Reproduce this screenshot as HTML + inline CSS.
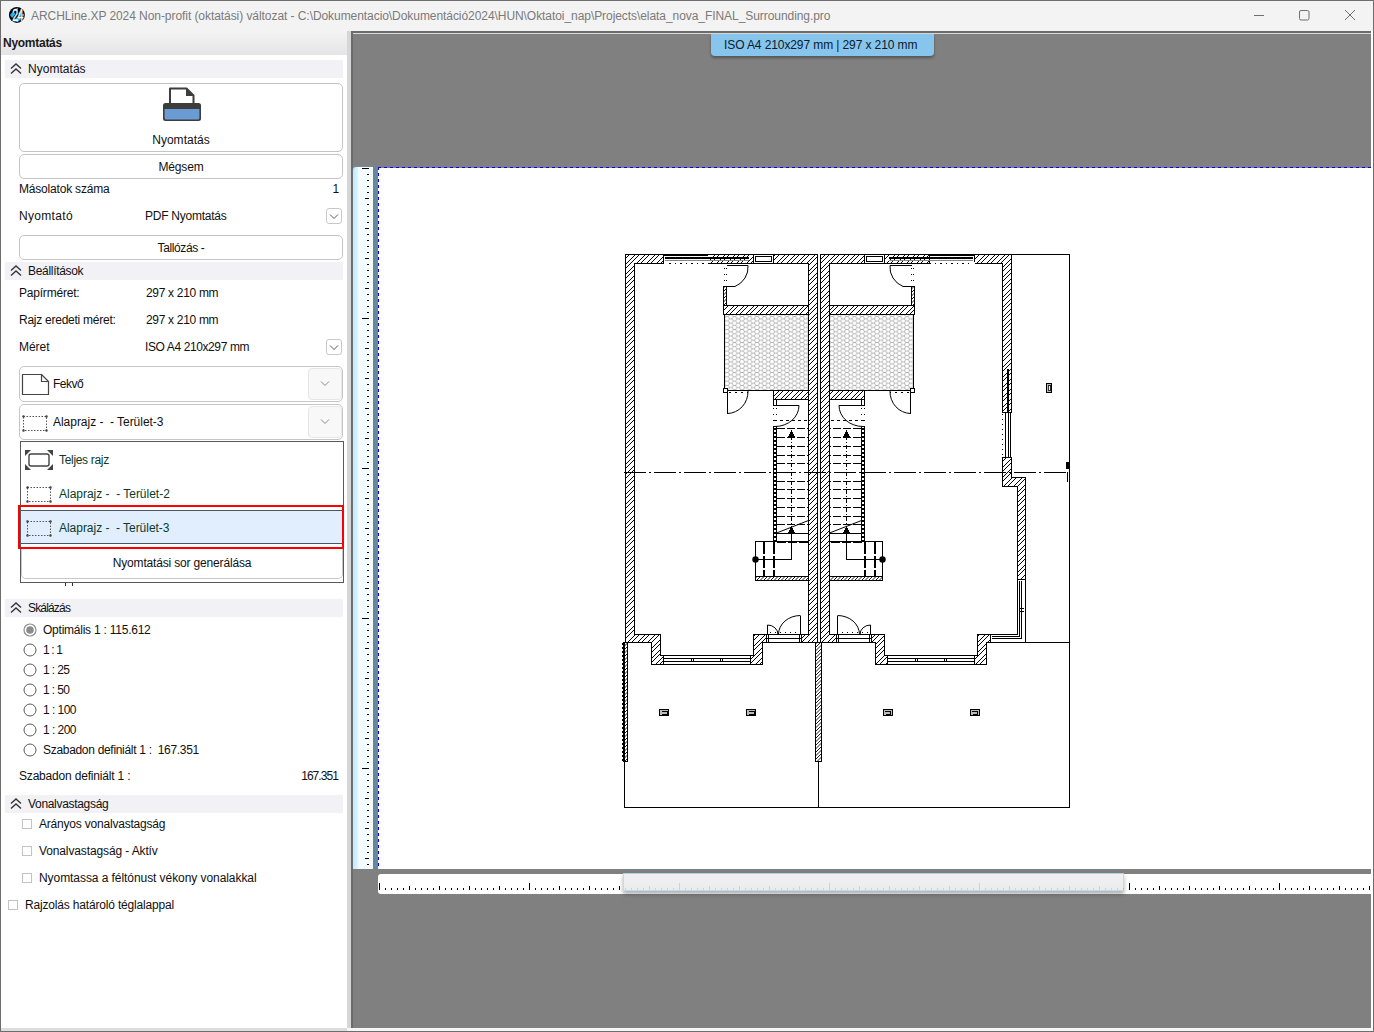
<!DOCTYPE html>
<html lang="hu">
<head>
<meta charset="utf-8">
<title>ARCHLine.XP 2024</title>
<style>
*{box-sizing:border-box;margin:0;padding:0}
html,body{width:1374px;height:1032px;overflow:hidden;background:#fff}
body{position:relative;font-family:"Liberation Sans",sans-serif;font-size:12px;color:#111;}
.abs{position:absolute}
.t{position:absolute;white-space:nowrap;line-height:16px;height:16px;font-size:12px;color:#101010;letter-spacing:-0.07px}
#titlebar{left:0;top:0;width:1374px;height:31px;background:#f3f3f3;border-top:1px solid #6d6d6d}
#title{left:31px;top:8px;color:#7a7a7a;font-size:12px;letter-spacing:-0.075px}
#frameL{left:0;top:0;width:1px;height:1032px;background:#6d6d6d}
#panelhead{left:1px;top:31px;width:346px;height:24px;background:linear-gradient(#f4f4f4,#e4e4e6)}
#panelhead .t{left:2px;top:4px;font-weight:bold;color:#1a1a1a}
.sec{position:absolute;left:5px;width:338px;height:18px;background:#f1f1f6}
.sec .t{left:23px;top:1px}
.sec svg{position:absolute;left:5px;top:3px}
.btn{position:absolute;left:19px;width:324px;border:1px solid #c4c4c4;border-radius:5px;background:#fff}
.btn .t{left:0;width:100%;text-align:center}
.dd{position:absolute;left:326px;width:16px;height:16px;border:1px solid #c8c8c8;border-radius:3px;background:#fff}
.combo{position:absolute;left:19px;width:324px;height:36px;border:1px solid #c6c6c6;border-radius:5px;background:#fff}
.combo .arrow{position:absolute;right:0;top:1px;width:34px;height:32px;background:#f8f8f8;border:1px solid #e6e6e6;border-radius:4px}
</style>
</head>
<body>
<div id="titlebar" class="abs"></div>
<div id="frameL" class="abs"></div>
<div id="title" class="t" style="letter-spacing:-0.063px">ARCHLine.XP 2024 Non-profit (oktatási) változat - C:\Dokumentacio\Dokumentáció2024\HUN\Oktatoi_nap\Projects\elata_nova_FINAL_Surrounding.pro</div>

<!-- LEFT PANEL -->
<div id="panelhead" class="abs"><div class="t" style="letter-spacing:-0.270px">Nyomtatás</div></div>

<div class="sec" style="top:60px"><svg width="12" height="12" viewBox="0 0 12 12"><path d="M1 5.6 L6 1 L11 5.6 M1 10.6 L6 6 L11 10.6" fill="none" stroke="#333" stroke-width="1.3"/></svg><div class="t" style="letter-spacing:0.030px">Nyomtatás</div></div>
<div class="btn" style="top:83px;height:69px"><div class="t" style="letter-spacing:0.030px;top:48px">Nyomtatás</div></div>
<svg class="abs" style="left:161px;top:85px" width="42" height="38" viewBox="0 0 42 38">
<path d="M9 18 V3.5 H25.5 L32.5 10.5 V18" fill="#fff" stroke="#3d3d3d" stroke-width="2" stroke-linejoin="round"/>
<path d="M25 3 L33 11 H25 Z" fill="#3d3d3d"/>
<rect x="2" y="18" width="38" height="18" rx="2.5" fill="#3d3d3d"/>
<path d="M3.6 24 H38.4 V33 Q38.4 34.4 37 34.4 H5 Q3.6 34.4 3.6 33 Z" fill="#6a9bd2"/>
</svg>
<div class="btn" style="top:154px;height:25px"><div class="t" style="letter-spacing:-0.163px;top:4px">Mégsem</div></div>
<div class="t" style="letter-spacing:-0.191px;left:19px;top:181px;">Másolatok száma</div>
<div class="t" style="right:1035px;top:181px">1</div>
<div class="t" style="letter-spacing:0.320px;left:19px;top:208px;">Nyomtató</div>
<div class="t" style="letter-spacing:-0.249px;left:145px;top:208px;">PDF Nyomtatás</div>
<div class="dd" style="top:208px"><svg width="14" height="14" viewBox="0 0 14 14" style="position:absolute;left:0;top:0"><path d="M3 5.5 L7 9.5 L11 5.5" fill="none" stroke="#555" stroke-width="1"/></svg></div>
<div class="btn" style="top:235px;height:25px"><div class="t" style="letter-spacing:-0.387px;top:4px">Tallózás -</div></div>
<div class="sec" style="top:262px"><svg width="12" height="12" viewBox="0 0 12 12"><path d="M1 5.6 L6 1 L11 5.6 M1 10.6 L6 6 L11 10.6" fill="none" stroke="#333" stroke-width="1.3"/></svg><div class="t" style="letter-spacing:-0.310px">Beállítások</div></div>
<div class="t" style="letter-spacing:-0.210px;left:19px;top:285px;">Papírméret:</div>
<div class="t" style="letter-spacing:-0.313px;left:146px;top:285px;">297 x 210 mm</div>
<div class="t" style="letter-spacing:-0.254px;left:19px;top:312px;">Rajz eredeti méret:</div>
<div class="t" style="letter-spacing:-0.313px;left:146px;top:312px;">297 x 210 mm</div>
<div class="t" style="letter-spacing:-0.047px;left:19px;top:339px;">Méret</div>
<div class="t" style="letter-spacing:-0.390px;left:145px;top:339px;">ISO A4 210x297 mm</div>
<div class="dd" style="top:339px"><svg width="14" height="14" viewBox="0 0 14 14" style="position:absolute;left:0;top:0"><path d="M3 5.5 L7 9.5 L11 5.5" fill="none" stroke="#555" stroke-width="1"/></svg></div>
<div class="combo" style="top:366px"><div class="arrow"><svg width="32" height="29" viewBox="0 0 32 29" style="position:absolute;left:0;top:0"><path d="M12 12.5 L16 16.5 L20 12.5" fill="none" stroke="#8a8a8a" stroke-width="1"/></svg></div></div>
<svg class="abs" style="left:21px;top:373px" width="29" height="23" viewBox="0 0 29 23"><path d="M1.5 1.5 H20.5 L27.5 8.5 V21.5 H1.5 Z" fill="#fff" stroke="#444" stroke-width="1.2" stroke-linejoin="round"/><path d="M20.5 1.5 V8.5 H27.5" fill="none" stroke="#444" stroke-width="1.2"/></svg>
<div class="t" style="letter-spacing:-0.472px;left:53px;top:376px;">Fekvő</div>
<div class="combo" style="top:404px"><div class="arrow"><svg width="32" height="29" viewBox="0 0 32 29" style="position:absolute;left:0;top:0"><path d="M12 12.5 L16 16.5 L20 12.5" fill="none" stroke="#8a8a8a" stroke-width="1"/></svg></div></div>
<svg class="abs" style="left:22px;top:415px" width="26" height="17" viewBox="0 0 26 17"><rect x="1.5" y="1.5" width="23" height="14" fill="none" stroke="#555" stroke-width="1" stroke-dasharray="1.5 1.5"/><g fill="#444"><rect x="0.3" y="0.3" width="2.4" height="2.4" rx="1"/><rect x="23.3" y="0.3" width="2.4" height="2.4" rx="1"/><rect x="0.3" y="14.3" width="2.4" height="2.4" rx="1"/><rect x="23.3" y="14.3" width="2.4" height="2.4" rx="1"/></g></svg>
<div class="t" style="letter-spacing:-0.030px;left:53px;top:414px;">Alaprajz -&nbsp; - Terület-3</div>
<div class="abs" style="left:65px;top:582px;width:1px;height:4px;background:#333"></div><div class="abs" style="left:72px;top:582px;width:1px;height:4px;background:#333"></div>
<div class="abs" id="ddlist" style="left:20px;top:441px;width:324px;height:142px;background:#fff;border:1px solid #5a5a5a"></div>
<svg class="abs" style="left:24px;top:449px" width="30" height="22" viewBox="0 0 30 22"><g fill="#444"><path d="M1 1 H7 L1 7 Z"/><path d="M29 1 H23 L29 7 Z"/><path d="M1 21 H7 L1 15 Z"/><path d="M29 21 H23 L29 15 Z"/></g><rect x="5" y="5" width="20" height="12" rx="2" fill="#fff" stroke="#444" stroke-width="1.4"/></svg>
<div class="t" style="letter-spacing:-0.316px;left:59px;top:452px;color:#0c3a2a">Teljes rajz</div>
<svg class="abs" style="left:26px;top:486px" width="26" height="17" viewBox="0 0 26 17"><rect x="1.5" y="1.5" width="23" height="14" fill="none" stroke="#555" stroke-width="1" stroke-dasharray="1.5 1.5"/><g fill="#444"><rect x="0.3" y="0.3" width="2.4" height="2.4" rx="1"/><rect x="23.3" y="0.3" width="2.4" height="2.4" rx="1"/><rect x="0.3" y="14.3" width="2.4" height="2.4" rx="1"/><rect x="23.3" y="14.3" width="2.4" height="2.4" rx="1"/></g></svg>
<div class="t" style="letter-spacing:-0.016px;left:59px;top:486px;color:#0c3a2a">Alaprajz -&nbsp; - Terület-2</div>
<div class="abs" style="left:21px;top:510px;width:321px;height:34px;background:#e0eefe;border-top:1px solid #4a5562;border-bottom:1px solid #4a5562"></div>
<svg class="abs" style="left:26px;top:520px" width="26" height="17" viewBox="0 0 26 17"><rect x="1.5" y="1.5" width="23" height="14" fill="none" stroke="#555" stroke-width="1" stroke-dasharray="1.5 1.5"/><g fill="#444"><rect x="0.3" y="0.3" width="2.4" height="2.4" rx="1"/><rect x="23.3" y="0.3" width="2.4" height="2.4" rx="1"/><rect x="0.3" y="14.3" width="2.4" height="2.4" rx="1"/><rect x="23.3" y="14.3" width="2.4" height="2.4" rx="1"/></g></svg>
<div class="t" style="letter-spacing:-0.030px;left:59px;top:520px;color:#0c3a2a">Alaprajz -&nbsp; - Terület-3</div>
<div class="abs" style="left:18px;top:505px;width:326px;height:44px;border:2px solid #f00"></div>
<div class="abs" style="left:21px;top:549px;width:322px;height:30px;border:1px solid #c8c8c8;border-top:none;border-radius:0 0 5px 5px"><div class="t" style="letter-spacing:-0.172px;left:0;width:100%;text-align:center;top:6px">Nyomtatási sor generálása</div></div>
<div class="sec" style="top:599px"><svg width="12" height="12" viewBox="0 0 12 12"><path d="M1 5.6 L6 1 L11 5.6 M1 10.6 L6 6 L11 10.6" fill="none" stroke="#333" stroke-width="1.3"/></svg><div class="t" style="letter-spacing:-0.829px">Skálázás</div></div>
<svg class="abs" style="left:23px;top:623px" width="14" height="14"><circle cx="7" cy="7" r="6" fill="#fff" stroke="#8c8c8c" stroke-width="1.2"/><circle cx="7" cy="7" r="3.8" fill="#8c8c8c"/></svg>
<div class="t" style="letter-spacing:-0.236px;left:43px;top:622px;">Optimális 1 : 115.612</div>
<svg class="abs" style="left:23px;top:643px" width="14" height="14"><circle cx="7" cy="7" r="6" fill="#fff" stroke="#5a5a5a" stroke-width="1"/></svg>
<div class="t" style="letter-spacing:-0.840px;left:43px;top:642px;">1 : 1</div>
<svg class="abs" style="left:23px;top:663px" width="14" height="14"><circle cx="7" cy="7" r="6" fill="#fff" stroke="#5a5a5a" stroke-width="1"/></svg>
<div class="t" style="letter-spacing:-0.606px;left:43px;top:662px;">1 : 25</div>
<svg class="abs" style="left:23px;top:683px" width="14" height="14"><circle cx="7" cy="7" r="6" fill="#fff" stroke="#5a5a5a" stroke-width="1"/></svg>
<div class="t" style="letter-spacing:-0.606px;left:43px;top:682px;">1 : 50</div>
<svg class="abs" style="left:23px;top:703px" width="14" height="14"><circle cx="7" cy="7" r="6" fill="#fff" stroke="#5a5a5a" stroke-width="1"/></svg>
<div class="t" style="letter-spacing:-0.534px;left:43px;top:702px;">1 : 100</div>
<svg class="abs" style="left:23px;top:723px" width="14" height="14"><circle cx="7" cy="7" r="6" fill="#fff" stroke="#5a5a5a" stroke-width="1"/></svg>
<div class="t" style="letter-spacing:-0.534px;left:43px;top:722px;">1 : 200</div>
<svg class="abs" style="left:23px;top:743px" width="14" height="14"><circle cx="7" cy="7" r="6" fill="#fff" stroke="#5a5a5a" stroke-width="1"/></svg>
<div class="t" style="letter-spacing:-0.306px;left:43px;top:742px;">Szabadon definiált 1 :&nbsp; 167.351</div>
<div class="t" style="letter-spacing:-0.187px;left:19px;top:768px;">Szabadon definiált 1 :</div>
<div class="t" style="letter-spacing:-0.932px;right:1036px;top:768px">167.351</div>
<div class="sec" style="top:795px"><svg width="12" height="12" viewBox="0 0 12 12"><path d="M1 5.6 L6 1 L11 5.6 M1 10.6 L6 6 L11 10.6" fill="none" stroke="#333" stroke-width="1.3"/></svg><div class="t" style="letter-spacing:-0.310px">Vonalvastagság</div></div>
<div class="abs" style="left:22px;top:819px;width:10px;height:10px;border:1px solid #c3c3c3;background:#fff"></div>
<div class="t" style="letter-spacing:-0.202px;left:39px;top:816px;">Arányos vonalvastagság</div>
<div class="abs" style="left:22px;top:846px;width:10px;height:10px;border:1px solid #c3c3c3;background:#fff"></div>
<div class="t" style="letter-spacing:-0.124px;left:39px;top:843px;">Vonalvastagság - Aktív</div>
<div class="abs" style="left:22px;top:873px;width:10px;height:10px;border:1px solid #c3c3c3;background:#fff"></div>
<div class="t" style="letter-spacing:-0.066px;left:39px;top:870px;">Nyomtassa a féltónust vékony vonalakkal</div>
<div class="abs" style="left:8px;top:900px;width:10px;height:10px;border:1px solid #c3c3c3;background:#fff"></div>
<div class="t" style="letter-spacing:-0.172px;left:25px;top:897px;">Rajzolás határoló téglalappal</div>
<!-- RIGHT -->
<div class="abs" style="left:347px;top:31px;width:4px;height:997px;background:#d6d6d6"></div>
<div class="abs" style="left:351px;top:31px;width:1020px;height:997px;background:#808080;border-left:2px solid #6b6b6b;border-top:2px solid #6b6b6b"></div>
<div class="abs" style="left:353px;top:33px;width:1018px;height:1px;background:#d9d9d9"></div>
<div class="abs" style="left:1371px;top:31px;width:2px;height:1000px;background:#fff"></div>
<div class="abs" style="left:1373px;top:0;width:1px;height:1032px;background:#6d6d6d"></div>
<div class="abs" style="left:1px;top:1028px;width:1372px;height:3px;background:#dcdcdc"></div>
<div class="abs" style="left:347px;top:1028px;width:1026px;height:3px;background:#f6f6f6"></div>
<div class="abs" style="left:0;top:1031px;width:1374px;height:1px;background:#6d6d6d"></div>
<svg class="abs" style="left:1240px;top:1px" width="130" height="30" viewBox="1240 1 130 30" shape-rendering="geometricPrecision"><g fill="none" stroke="#6f6f6f" stroke-width="1"><path d="M1254 15.5 H1264"/><rect x="1299.5" y="10.5" width="9.5" height="9.5" rx="1.5"/><path d="M1345 10 L1355 20 M1355 10 L1345 20"/></g></svg>
<svg class="abs" style="left:7px;top:5px" width="20" height="20" viewBox="7 5 20 20"><circle cx="16.9" cy="14.9" r="8.7" fill="#fff"/><circle cx="16.9" cy="14.9" r="8" fill="#000"/><g fill="#1fb4f5"><path d="M10 15 L13 11.5 L15.5 14 L12 18 Z"/><path d="M15 19 L18 16.5 L21 19.5 L17 22.6 Z"/><path d="M18.5 13 L20.5 11 L21.5 16.5 L19 16.5 Z"/><path d="M22 14.8 L23.4 13.4 L24.4 15.2 L23 16.6 Z"/><path d="M16 8.8 L18 7.6 L17.6 11 Z"/></g><text transform="translate(17.4 20.9) scale(0.86 1.3)" font-family="Liberation Sans, sans-serif" font-size="12.5" fill="#fff" stroke="#fff" stroke-width="0.25" text-anchor="middle" letter-spacing="-0.9">24</text></svg>
<div class="abs" style="left:378px;top:168px;width:993px;height:701px;background:#fff"></div>
<div class="abs" style="left:711px;top:34px;width:223px;height:22px;background:#88c5ed;border-radius:0 0 4px 4px;box-shadow:0 2px 3px rgba(0,0,0,.35)"><div class="t" style="letter-spacing:-0.147px;left:13px;top:3px;color:#0a1a2a;letter-spacing:-0.1px">ISO A4 210x297 mm | 297 x 210 mm</div></div>
<div class="abs" style="left:353px;top:167px;width:20px;height:702px;background:linear-gradient(90deg,#bfe9fb 0,#d8f2fd 4px,#f4fcff 6px,#f7fdff 100%);box-shadow:2px 0 0 #64879a, 5px 0 0 #6a8899, 0 -1px 2px #6e8da0;border-radius:3px 0 0 0"></div>
<div class="abs" style="left:378px;top:874px;width:993px;height:20px;background:#fff;border-radius:3px 0 0 3px"></div>
<svg class="abs" style="left:0;top:0" width="1374" height="1032" viewBox="0 0 1374 1032" shape-rendering="crispEdges">
<defs>
<pattern id="hat" width="10" height="10" patternUnits="userSpaceOnUse"><path d="M-1 11 L11 -1 M-1 5 L5 -1 M3 11 L11 3" stroke="#000" stroke-width="1" shape-rendering="geometricPrecision"/></pattern>
<pattern id="hex" width="7.5" height="4.3" x="727" y="314.5" patternUnits="userSpaceOnUse"><path d="M0 2.15 H1.25 L2.5 0 H5.0 L6.25 2.15 H7.5 M1.25 2.15 L2.5 4.3 H5.0 L6.25 2.15" fill="none" stroke="#9c9c9c" stroke-width="0.7" shape-rendering="geometricPrecision"/></pattern>
<pattern id="hat2" width="7" height="7" patternUnits="userSpaceOnUse"><path d="M-1 8 L8 -1 M-1 4.5 L4.5 -1 M2.5 8 L8 2.5" stroke="#000" stroke-width="0.9" shape-rendering="geometricPrecision"/></pattern>
</defs>
<path d="M378 167.5 H1371 M378.5 167 V868" fill="none" stroke="#0000ff" stroke-width="1" stroke-dasharray="3 3"/>
<path d="M362 168.5 H369 M367 174.5 H369 M367 180.5 H369 M367 186.5 H369 M367 192.5 H369 M365 198.5 H369 M367 204.5 H369 M367 210.5 H369 M367 216.5 H369 M367 222.5 H369 M365 228.5 H369 M367 234.5 H369 M367 240.5 H369 M367 246.5 H369 M367 252.5 H369 M365 258.5 H369 M367 264.5 H369 M367 270.5 H369 M367 276.5 H369 M367 282.5 H369 M365 288.5 H369 M367 294.5 H369 M367 300.5 H369 M367 306.5 H369 M367 312.5 H369 M362 318.5 H369 M367 324.5 H369 M367 330.5 H369 M367 336.5 H369 M367 342.5 H369 M365 348.5 H369 M367 354.5 H369 M367 360.5 H369 M367 366.5 H369 M367 372.5 H369 M365 378.5 H369 M367 384.5 H369 M367 390.5 H369 M367 396.5 H369 M367 402.5 H369 M365 408.5 H369 M367 414.5 H369 M367 420.5 H369 M367 426.5 H369 M367 432.5 H369 M365 438.5 H369 M367 444.5 H369 M367 450.5 H369 M367 456.5 H369 M367 462.5 H369 M362 468.5 H369 M367 474.5 H369 M367 480.5 H369 M367 486.5 H369 M367 492.5 H369 M365 498.5 H369 M367 504.5 H369 M367 510.5 H369 M367 516.5 H369 M367 522.5 H369 M365 528.5 H369 M367 534.5 H369 M367 540.5 H369 M367 546.5 H369 M367 552.5 H369 M365 558.5 H369 M367 564.5 H369 M367 570.5 H369 M367 576.5 H369 M367 582.5 H369 M365 588.5 H369 M367 594.5 H369 M367 600.5 H369 M367 606.5 H369 M367 612.5 H369 M362 618.5 H369 M367 624.5 H369 M367 630.5 H369 M367 636.5 H369 M367 642.5 H369 M365 648.5 H369 M367 654.5 H369 M367 660.5 H369 M367 666.5 H369 M367 672.5 H369 M365 678.5 H369 M367 684.5 H369 M367 690.5 H369 M367 696.5 H369 M367 702.5 H369 M365 708.5 H369 M367 714.5 H369 M367 720.5 H369 M367 726.5 H369 M367 732.5 H369 M365 738.5 H369 M367 744.5 H369 M367 750.5 H369 M367 756.5 H369 M367 762.5 H369 M362 768.5 H369 M367 774.5 H369 M367 780.5 H369 M367 786.5 H369 M367 792.5 H369 M365 798.5 H369 M367 804.5 H369 M367 810.5 H369 M367 816.5 H369 M367 822.5 H369 M365 828.5 H369 M367 834.5 H369 M367 840.5 H369 M367 846.5 H369 M367 852.5 H369 M365 858.5 H369 M367 864.5 H369" stroke="#000" stroke-width="1" fill="none"/>
<path d="M379.5 883 V890 M385.5 888 V890 M391.5 888 V890 M397.5 888 V890 M403.5 888 V890 M409.5 886 V890 M415.5 888 V890 M421.5 888 V890 M427.5 888 V890 M433.5 888 V890 M439.5 886 V890 M445.5 888 V890 M451.5 888 V890 M457.5 888 V890 M463.5 888 V890 M469.5 886 V890 M475.5 888 V890 M481.5 888 V890 M487.5 888 V890 M493.5 888 V890 M499.5 886 V890 M505.5 888 V890 M511.5 888 V890 M517.5 888 V890 M523.5 888 V890 M529.5 883 V890 M535.5 888 V890 M541.5 888 V890 M547.5 888 V890 M553.5 888 V890 M559.5 886 V890 M565.5 888 V890 M571.5 888 V890 M577.5 888 V890 M583.5 888 V890 M589.5 886 V890 M595.5 888 V890 M601.5 888 V890 M607.5 888 V890 M613.5 888 V890 M619.5 886 V890 M625.5 888 V890 M631.5 888 V890 M637.5 888 V890 M643.5 888 V890 M649.5 886 V890 M655.5 888 V890 M661.5 888 V890 M667.5 888 V890 M673.5 888 V890 M679.5 883 V890 M685.5 888 V890 M691.5 888 V890 M697.5 888 V890 M703.5 888 V890 M709.5 886 V890 M715.5 888 V890 M721.5 888 V890 M727.5 888 V890 M733.5 888 V890 M739.5 886 V890 M745.5 888 V890 M751.5 888 V890 M757.5 888 V890 M763.5 888 V890 M769.5 886 V890 M775.5 888 V890 M781.5 888 V890 M787.5 888 V890 M793.5 888 V890 M799.5 886 V890 M805.5 888 V890 M811.5 888 V890 M817.5 888 V890 M823.5 888 V890 M829.5 883 V890 M835.5 888 V890 M841.5 888 V890 M847.5 888 V890 M853.5 888 V890 M859.5 886 V890 M865.5 888 V890 M871.5 888 V890 M877.5 888 V890 M883.5 888 V890 M889.5 886 V890 M895.5 888 V890 M901.5 888 V890 M907.5 888 V890 M913.5 888 V890 M919.5 886 V890 M925.5 888 V890 M931.5 888 V890 M937.5 888 V890 M943.5 888 V890 M949.5 886 V890 M955.5 888 V890 M961.5 888 V890 M967.5 888 V890 M973.5 888 V890 M979.5 883 V890 M985.5 888 V890 M991.5 888 V890 M997.5 888 V890 M1003.5 888 V890 M1009.5 886 V890 M1015.5 888 V890 M1021.5 888 V890 M1027.5 888 V890 M1033.5 888 V890 M1039.5 886 V890 M1045.5 888 V890 M1051.5 888 V890 M1057.5 888 V890 M1063.5 888 V890 M1069.5 886 V890 M1075.5 888 V890 M1081.5 888 V890 M1087.5 888 V890 M1093.5 888 V890 M1099.5 886 V890 M1105.5 888 V890 M1111.5 888 V890 M1117.5 888 V890 M1123.5 888 V890 M1129.5 883 V890 M1135.5 888 V890 M1141.5 888 V890 M1147.5 888 V890 M1153.5 888 V890 M1159.5 886 V890 M1165.5 888 V890 M1171.5 888 V890 M1177.5 888 V890 M1183.5 888 V890 M1189.5 886 V890 M1195.5 888 V890 M1201.5 888 V890 M1207.5 888 V890 M1213.5 888 V890 M1219.5 886 V890 M1225.5 888 V890 M1231.5 888 V890 M1237.5 888 V890 M1243.5 888 V890 M1249.5 886 V890 M1255.5 888 V890 M1261.5 888 V890 M1267.5 888 V890 M1273.5 888 V890 M1279.5 883 V890 M1285.5 888 V890 M1291.5 888 V890 M1297.5 888 V890 M1303.5 888 V890 M1309.5 886 V890 M1315.5 888 V890 M1321.5 888 V890 M1327.5 888 V890 M1333.5 888 V890 M1339.5 886 V890 M1345.5 888 V890 M1351.5 888 V890 M1357.5 888 V890 M1363.5 888 V890 M1369.5 886 V890" stroke="#000" stroke-width="1" fill="none"/>
<path d="M624.5 642.5 L624.5 807.5 L1069.5 807.5 L1069.5 254.5 L1011.5 254.5" fill="none" stroke="#000" stroke-width="1" />
<path d="M818.5 762.0 L818.5 807.5" fill="none" stroke="#000" stroke-width="1" />
<path d="M1025.5 642.5 L1069.5 642.5" fill="none" stroke="#000" stroke-width="1" />
<path d="M624 472.5 H1069" stroke="#000" stroke-width="1" fill="none" stroke-dasharray="22 3 2 3"/>
<rect x="1066" y="462" width="4" height="7" fill="#000"/><path d="M1067.5 472 V482" stroke="#000" fill="none"/>
<path d="M625.5 254.5 L663.5 254.5 L663.5 263.5 L634.5 263.5 L634.5 634.5 L660.5 634.5 L660.5 655.5 L663.5 655.5 L663.5 664.5 L651.5 664.5 L651.5 642.5 L625.5 642.5 Z" fill="url(#hat)" stroke="#000" stroke-width="1" />
<path d="M974.5 254.5 L1011.5 254.5 L1011.5 412.0 L1002.5 412.0 L1002.5 263.5 L974.5 263.5 Z" fill="url(#hat)" stroke="#000" stroke-width="1" />
<path d="M708.5 254.5 L753.5 254.5 L753.5 263.5 L708.5 263.5 Z" fill="url(#hat)" stroke="#000" stroke-width="1" />
<path d="M663.5 254.5 L708.5 254.5 L708.5 263.5 L663.5 263.5 Z" fill="#fff" stroke="#fff" stroke-width="0"/>
<path d="M663.5 254.5 L663.5 261.5" fill="none" stroke="#000" stroke-width="1" />
<path d="M664.0 255.0 L708.0 255.0" fill="none" stroke="#000" stroke-width="2"/>
<path d="M665.0 258.0 L749.0 258.0" fill="none" stroke="#000" stroke-width="2"/>
<path d="M665.0 260.5 L749.0 260.5" fill="none" stroke-width="1" stroke="#888"/>
<path d="M753.5 254.5 L773.5 254.5 L773.5 263.5 L753.5 263.5 Z" fill="#fff" stroke="#000" stroke-width="1" />
<path d="M755.5 256.5 L771.5 256.5 L771.5 261.5 L755.5 261.5 Z" fill="#fff" stroke="#000" stroke-width="1" />
<path d="M669.0 263.5 L723.0 263.5" fill="none" stroke="#000" stroke-width="1" stroke-dasharray="1.5 4"/>
<path d="M773.5 254.5 L817.5 254.5 L817.5 642.5 L801.5 642.5 L801.5 634.5 L808.5 634.5 L808.5 263.5 L773.5 263.5 Z" fill="url(#hat)" stroke="#000" stroke-width="1" />
<path d="M929.5 254.5 L884.5 254.5 L884.5 263.5 L929.5 263.5 Z" fill="url(#hat)" stroke="#000" stroke-width="1" />
<path d="M974.5 254.5 L929.5 254.5 L929.5 263.5 L974.5 263.5 Z" fill="#fff" stroke="#fff" stroke-width="0"/>
<path d="M974.5 254.5 L974.5 261.5" fill="none" stroke="#000" stroke-width="1" />
<path d="M974.0 255.0 L930.0 255.0" fill="none" stroke="#000" stroke-width="2"/>
<path d="M973.0 258.0 L889.0 258.0" fill="none" stroke="#000" stroke-width="2"/>
<path d="M973.0 260.5 L889.0 260.5" fill="none" stroke-width="1" stroke="#888"/>
<path d="M884.5 254.5 L864.5 254.5 L864.5 263.5 L884.5 263.5 Z" fill="#fff" stroke="#000" stroke-width="1" />
<path d="M882.5 256.5 L866.5 256.5 L866.5 261.5 L882.5 261.5 Z" fill="#fff" stroke="#000" stroke-width="1" />
<path d="M969.0 263.5 L915.0 263.5" fill="none" stroke="#000" stroke-width="1" stroke-dasharray="1.5 4"/>
<path d="M864.5 254.5 L820.5 254.5 L820.5 642.5 L836.5 642.5 L836.5 634.5 L829.5 634.5 L829.5 263.5 L864.5 263.5 Z" fill="url(#hat)" stroke="#000" stroke-width="1" />
<path d="M723.5 286.5 L726.5 286.5 L726.5 305.5 L723.5 305.5 Z" fill="url(#hat2)" stroke="#000" stroke-width="1" />
<path d="M726.5 265.5 L748.0 265.5" fill="none" stroke="#000" stroke-width="1" />
<path d="M748 265.5 A22 21 0 0 1 735 286.5 H726.5" stroke="#000" stroke-width="1" fill="none" shape-rendering="geometricPrecision"/>
<path d="M724.5 268.0 L724.5 286.0" fill="none" stroke="#000" stroke-width="1" stroke-dasharray="1 5"/>
<path d="M726.5 268.0 L726.5 286.0" fill="none" stroke="#000" stroke-width="1" stroke-dasharray="1 5"/>
<path d="M723.5 305.5 L808.5 305.5 L808.5 314.5 L723.5 314.5 Z" fill="url(#hat)" stroke="#000" stroke-width="1" />
<path d="M724.5 314.5 L808.5 314.5 L808.5 390.5 L724.5 390.5 Z" fill="url(#hex)" stroke="#000" stroke-width="1" />
<path d="M723.5 388.5 L727.5 388.5 L727.5 392.5 L723.5 392.5 Z" fill="#fff" stroke="#000" stroke-width="1" />
<path d="M727.5 391.0 L727.5 413.5" fill="none" stroke="#000" stroke-width="1" />
<path d="M727.5 413.5 A21 22 0 0 0 748 391" stroke="#000" stroke-width="1" fill="none" shape-rendering="geometricPrecision"/>
<path d="M729.0 392.5 L748.0 392.5" fill="none" stroke="#000" stroke-width="1" stroke-dasharray="2 4"/>
<path d="M773.5 390.5 L808.5 390.5 L808.5 399.5 L773.5 399.5 Z" fill="url(#hat)" stroke="#000" stroke-width="1" />
<path d="M773.5 399.5 L776.5 399.5 L776.5 405.5 L773.5 405.5 Z" fill="#fff" stroke="#000" stroke-width="1" />
<path d="M776.5 405.5 L799.0 405.5" fill="none" stroke="#000" stroke-width="1" />
<path d="M799 405.5 A24 21 0 0 1 775 426.5" stroke="#000" stroke-width="1" fill="none" shape-rendering="geometricPrecision"/>
<path d="M773.5 408.0 L773.5 426.0" fill="none" stroke="#000" stroke-width="1" stroke-dasharray="1 5"/>
<path d="M776.5 408.0 L776.5 426.0" fill="none" stroke="#000" stroke-width="1" stroke-dasharray="1 5"/>
<path d="M774.0 420.5 L808.0 420.5" fill="none" stroke="#000" stroke-width="1" stroke-dasharray="3 3"/>
<path d="M773.5 426.5 L776.5 426.5 L776.5 541.5 L773.5 541.5 Z" fill="#fff" stroke="#000" stroke-width="1" />
<path d="M775.0 428.0 L775.0 541.0" fill="none" stroke="#000" stroke-dasharray="2 2" stroke-width="2"/>
<path d="M777.0 428.5 L808.0 428.5" fill="none" stroke="#000" stroke-width="1" stroke-dasharray="8 2"/>
<path d="M777.0 437.5 L808.0 437.5" fill="none" stroke="#000" stroke-width="1" stroke-dasharray="8 2"/>
<path d="M777.0 446.5 L808.0 446.5" fill="none" stroke="#000" stroke-width="1" stroke-dasharray="8 2"/>
<path d="M777.0 455.5 L808.0 455.5" fill="none" stroke="#000" stroke-width="1" stroke-dasharray="8 2"/>
<path d="M777.0 463.5 L808.0 463.5" fill="none" stroke="#000" stroke-width="1" stroke-dasharray="8 2"/>
<path d="M777.0 481.5 L808.0 481.5" fill="none" stroke="#000" stroke-width="1" stroke-dasharray="8 2"/>
<path d="M777.0 489.5 L808.0 489.5" fill="none" stroke="#000" stroke-width="1" stroke-dasharray="8 2"/>
<path d="M777.0 498.5 L808.0 498.5" fill="none" stroke="#000" stroke-width="1" stroke-dasharray="8 2"/>
<path d="M777.0 507.5 L808.0 507.5" fill="none" stroke="#000" stroke-width="1" stroke-dasharray="8 2"/>
<path d="M777.0 516.5 L808.0 516.5" fill="none" stroke="#000" stroke-width="1" stroke-dasharray="8 2"/>
<path d="M777.0 524.5 L808.0 524.5" fill="none" stroke="#000" stroke-width="1" stroke-dasharray="8 2"/>
<path d="M776.5 533.5 L808.5 533.5" fill="none" stroke="#000" stroke-width="1" />
<path d="M776.5 541.5 L808.5 541.5" fill="none" stroke="#000" stroke-width="2" stroke-dasharray="9 2"/>
<path d="M791.5 436.0 L791.5 527.0" fill="none" stroke="#000" stroke-width="1" stroke-dasharray="4 2 1 2"/>
<path d="M791.5 431.0 L789.0 436.5 L794.0 436.5 Z" fill="#000" stroke="#000" stroke-width="1" />
<path d="M791.5 527.0 L789.0 532.5 L794.0 532.5 Z" fill="#000" stroke="#000" stroke-width="1" />
<path d="M776.5 533.0 L808.5 520.5" fill="none" stroke="#000" stroke-width="1" shape-rendering="geometricPrecision"/>
<path d="M791.5 533.0 L791.5 559.5 L755.5 559.5" fill="none" stroke="#000" stroke-width="1" />
<path d="M755.5 541.5 L808.5 541.5 L808.5 576.5 L755.5 576.5 Z" fill="none" stroke="#000" stroke-width="1" />
<path d="M763.5 542.0 L763.5 576.0" fill="none" stroke="#000" stroke-width="2" stroke-dasharray="12 2"/>
<path d="M773.5 542.0 L773.5 576.0" fill="none" stroke="#000" stroke-width="2" stroke-dasharray="12 2"/>
<path d="M755.5 576.5 L808.5 576.5 L808.5 580.5 L755.5 580.5 Z" fill="url(#hat2)" stroke="#000" stroke-width="1" />
<circle cx="755.5" cy="559.5" r="3.2" fill="#000" shape-rendering="geometricPrecision"/>
<path d="M750.5 664.5 L762.5 664.5 L762.5 642.5 L766.5 642.5 L766.5 634.5 L753.5 634.5 L753.5 655.5 L750.5 655.5 Z" fill="url(#hat)" stroke="#000" stroke-width="1" />
<path d="M663.5 655.5 L750.5 655.5 L750.5 664.5 L663.5 664.5 Z" fill="#fff" stroke="#000" stroke-width="1" />
<path d="M663.5 658.5 L750.5 658.5" fill="none" stroke="#000" stroke-width="1" />
<path d="M663.5 661.5 L750.5 661.5" fill="none" stroke="#000" stroke-width="1" />
<path d="M691.5 658.5 L691.5 661.5" fill="none" stroke="#000" stroke-width="1" />
<path d="M693.5 658.5 L693.5 661.5" fill="none" stroke="#000" stroke-width="1" />
<path d="M720.5 658.5 L720.5 661.5" fill="none" stroke="#000" stroke-width="1" />
<path d="M722.5 658.5 L722.5 661.5" fill="none" stroke="#000" stroke-width="1" />
<path d="M766.5 634.5 L801.5 634.5 L801.5 642.5 L766.5 642.5 Z" fill="#fff" stroke="#000" stroke-width="1" />
<path d="M766.5 638.5 L801.5 638.5" fill="none" stroke="#000" stroke-width="1" />
<path d="M768.5 634.5 L768.5 642.5" fill="none" stroke="#000" stroke-width="1" />
<path d="M799.5 634.5 L799.5 642.5" fill="none" stroke="#000" stroke-width="1" />
<path d="M767.5 634.5 L767.5 625.0" fill="none" stroke="#000" stroke-width="1" />
<path d="M800.5 634.5 L800.5 615.5" fill="none" stroke="#000" stroke-width="1" />
<path d="M767.5 625 A10.5 9.5 0 0 1 778 634.5" stroke="#000" stroke-width="1" fill="none" shape-rendering="geometricPrecision"/>
<path d="M800.5 615.5 A22 19 0 0 0 778.5 634.5" stroke="#000" stroke-width="1" fill="none" shape-rendering="geometricPrecision"/>
<path d="M770.0 632.5 L799.0 632.5" fill="none" stroke="#000" stroke-width="1" stroke-dasharray="1 4"/>
<rect x="659.5" y="709.5" width="9" height="6" fill="#bbb" stroke="#000"/><path d="M661.5 711.5 H667.0 V714 H662.0" stroke="#000" fill="none"/>
<rect x="746.5" y="709.5" width="9" height="6" fill="#bbb" stroke="#000"/><path d="M748.5 711.5 H754.0 V714 H749.0" stroke="#000" fill="none"/>
<path d="M914.5 286.5 L911.5 286.5 L911.5 305.5 L914.5 305.5 Z" fill="url(#hat2)" stroke="#000" stroke-width="1" />
<path d="M911.5 265.5 L890.0 265.5" fill="none" stroke="#000" stroke-width="1" />
<path d="M890.0 265.5 A22 21 0 0 0 903.0 286.5 H911.5" stroke="#000" stroke-width="1" fill="none" shape-rendering="geometricPrecision"/>
<path d="M913.5 268.0 L913.5 286.0" fill="none" stroke="#000" stroke-width="1" stroke-dasharray="1 5"/>
<path d="M911.5 268.0 L911.5 286.0" fill="none" stroke="#000" stroke-width="1" stroke-dasharray="1 5"/>
<path d="M914.5 305.5 L829.5 305.5 L829.5 314.5 L914.5 314.5 Z" fill="url(#hat)" stroke="#000" stroke-width="1" />
<path d="M913.5 314.5 L829.5 314.5 L829.5 390.5 L913.5 390.5 Z" fill="url(#hex)" stroke="#000" stroke-width="1" />
<path d="M914.5 388.5 L910.5 388.5 L910.5 392.5 L914.5 392.5 Z" fill="#fff" stroke="#000" stroke-width="1" />
<path d="M910.5 391.0 L910.5 413.5" fill="none" stroke="#000" stroke-width="1" />
<path d="M910.5 413.5 A21 22 0 0 1 890.0 391" stroke="#000" stroke-width="1" fill="none" shape-rendering="geometricPrecision"/>
<path d="M909.0 392.5 L890.0 392.5" fill="none" stroke="#000" stroke-width="1" stroke-dasharray="2 4"/>
<path d="M864.5 390.5 L829.5 390.5 L829.5 399.5 L864.5 399.5 Z" fill="url(#hat)" stroke="#000" stroke-width="1" />
<path d="M864.5 399.5 L861.5 399.5 L861.5 405.5 L864.5 405.5 Z" fill="#fff" stroke="#000" stroke-width="1" />
<path d="M861.5 405.5 L839.0 405.5" fill="none" stroke="#000" stroke-width="1" />
<path d="M839.0 405.5 A24 21 0 0 0 863.0 426.5" stroke="#000" stroke-width="1" fill="none" shape-rendering="geometricPrecision"/>
<path d="M864.5 408.0 L864.5 426.0" fill="none" stroke="#000" stroke-width="1" stroke-dasharray="1 5"/>
<path d="M861.5 408.0 L861.5 426.0" fill="none" stroke="#000" stroke-width="1" stroke-dasharray="1 5"/>
<path d="M864.0 420.5 L830.0 420.5" fill="none" stroke="#000" stroke-width="1" stroke-dasharray="3 3"/>
<path d="M864.5 426.5 L861.5 426.5 L861.5 541.5 L864.5 541.5 Z" fill="#fff" stroke="#000" stroke-width="1" />
<path d="M863.0 428.0 L863.0 541.0" fill="none" stroke="#000" stroke-dasharray="2 2" stroke-width="2"/>
<path d="M861.0 428.5 L830.0 428.5" fill="none" stroke="#000" stroke-width="1" stroke-dasharray="8 2"/>
<path d="M861.0 437.5 L830.0 437.5" fill="none" stroke="#000" stroke-width="1" stroke-dasharray="8 2"/>
<path d="M861.0 446.5 L830.0 446.5" fill="none" stroke="#000" stroke-width="1" stroke-dasharray="8 2"/>
<path d="M861.0 455.5 L830.0 455.5" fill="none" stroke="#000" stroke-width="1" stroke-dasharray="8 2"/>
<path d="M861.0 463.5 L830.0 463.5" fill="none" stroke="#000" stroke-width="1" stroke-dasharray="8 2"/>
<path d="M861.0 481.5 L830.0 481.5" fill="none" stroke="#000" stroke-width="1" stroke-dasharray="8 2"/>
<path d="M861.0 489.5 L830.0 489.5" fill="none" stroke="#000" stroke-width="1" stroke-dasharray="8 2"/>
<path d="M861.0 498.5 L830.0 498.5" fill="none" stroke="#000" stroke-width="1" stroke-dasharray="8 2"/>
<path d="M861.0 507.5 L830.0 507.5" fill="none" stroke="#000" stroke-width="1" stroke-dasharray="8 2"/>
<path d="M861.0 516.5 L830.0 516.5" fill="none" stroke="#000" stroke-width="1" stroke-dasharray="8 2"/>
<path d="M861.0 524.5 L830.0 524.5" fill="none" stroke="#000" stroke-width="1" stroke-dasharray="8 2"/>
<path d="M861.5 533.5 L829.5 533.5" fill="none" stroke="#000" stroke-width="1" />
<path d="M861.5 541.5 L829.5 541.5" fill="none" stroke="#000" stroke-width="2" stroke-dasharray="9 2"/>
<path d="M846.5 436.0 L846.5 527.0" fill="none" stroke="#000" stroke-width="1" stroke-dasharray="4 2 1 2"/>
<path d="M846.5 431.0 L849.0 436.5 L844.0 436.5 Z" fill="#000" stroke="#000" stroke-width="1" />
<path d="M846.5 527.0 L849.0 532.5 L844.0 532.5 Z" fill="#000" stroke="#000" stroke-width="1" />
<path d="M829.5 533.0 L861.5 520.5" fill="none" stroke="#000" stroke-width="1" shape-rendering="geometricPrecision"/>
<path d="M846.5 533.0 L846.5 559.5 L882.5 559.5" fill="none" stroke="#000" stroke-width="1" />
<path d="M882.5 541.5 L829.5 541.5 L829.5 576.5 L882.5 576.5 Z" fill="none" stroke="#000" stroke-width="1" />
<path d="M874.5 542.0 L874.5 576.0" fill="none" stroke="#000" stroke-width="2" stroke-dasharray="12 2"/>
<path d="M864.5 542.0 L864.5 576.0" fill="none" stroke="#000" stroke-width="2" stroke-dasharray="12 2"/>
<path d="M882.5 576.5 L829.5 576.5 L829.5 580.5 L882.5 580.5 Z" fill="url(#hat2)" stroke="#000" stroke-width="1" />
<circle cx="882.5" cy="559.5" r="3.2" fill="#000" shape-rendering="geometricPrecision"/>
<path d="M887.5 664.5 L875.5 664.5 L875.5 642.5 L871.5 642.5 L871.5 634.5 L884.5 634.5 L884.5 655.5 L887.5 655.5 Z" fill="url(#hat)" stroke="#000" stroke-width="1" />
<path d="M974.5 655.5 L887.5 655.5 L887.5 664.5 L974.5 664.5 Z" fill="#fff" stroke="#000" stroke-width="1" />
<path d="M974.5 658.5 L887.5 658.5" fill="none" stroke="#000" stroke-width="1" />
<path d="M974.5 661.5 L887.5 661.5" fill="none" stroke="#000" stroke-width="1" />
<path d="M946.5 658.5 L946.5 661.5" fill="none" stroke="#000" stroke-width="1" />
<path d="M944.5 658.5 L944.5 661.5" fill="none" stroke="#000" stroke-width="1" />
<path d="M917.5 658.5 L917.5 661.5" fill="none" stroke="#000" stroke-width="1" />
<path d="M915.5 658.5 L915.5 661.5" fill="none" stroke="#000" stroke-width="1" />
<path d="M871.5 634.5 L836.5 634.5 L836.5 642.5 L871.5 642.5 Z" fill="#fff" stroke="#000" stroke-width="1" />
<path d="M871.5 638.5 L836.5 638.5" fill="none" stroke="#000" stroke-width="1" />
<path d="M869.5 634.5 L869.5 642.5" fill="none" stroke="#000" stroke-width="1" />
<path d="M838.5 634.5 L838.5 642.5" fill="none" stroke="#000" stroke-width="1" />
<path d="M870.5 634.5 L870.5 625.0" fill="none" stroke="#000" stroke-width="1" />
<path d="M837.5 634.5 L837.5 615.5" fill="none" stroke="#000" stroke-width="1" />
<path d="M870.5 625 A10.5 9.5 0 0 0 860.0 634.5" stroke="#000" stroke-width="1" fill="none" shape-rendering="geometricPrecision"/>
<path d="M837.5 615.5 A22 19 0 0 1 859.5 634.5" stroke="#000" stroke-width="1" fill="none" shape-rendering="geometricPrecision"/>
<path d="M868.0 632.5 L839.0 632.5" fill="none" stroke="#000" stroke-width="1" stroke-dasharray="1 4"/>
<rect x="970.0" y="709.5" width="9" height="6" fill="#bbb" stroke="#000"/><path d="M972.0 711.5 H977.5 V714 H972.5" stroke="#000" fill="none"/>
<rect x="883.0" y="709.5" width="9" height="6" fill="#bbb" stroke="#000"/><path d="M885.0 711.5 H890.5 V714 H885.5" stroke="#000" fill="none"/>
<path d="M1007.5 369.0 L1007.5 412.0" fill="none" stroke="#000" stroke-width="2"/>
<path d="M1005.5 412.0 L1010.5 412.0 L1010.5 457.0 L1005.5 457.0 Z" fill="#fff" stroke="#000" stroke-width="1" />
<path d="M1008.5 412.0 L1008.5 457.0" fill="none" stroke="#000" stroke-width="1" />
<path d="M1002.5 414.0 L1002.5 457.0" fill="none" stroke="#000" stroke-width="1" stroke-dasharray="1 4"/>
<path d="M1002.5 457.0 L1011.5 457.0 L1011.5 477.5 L1025.5 477.5 L1025.5 579.5 L1017.5 579.5 L1017.5 486.5 L1002.5 486.5 Z" fill="url(#hat)" stroke="#000" stroke-width="1" />
<path d="M1017.5 579.5 L1025.5 579.5 L1025.5 642.5 L990.5 642.5 L990.5 634.5 L1017.5 634.5 Z" fill="#fff" stroke="#000" stroke-width="1" />
<path d="M1021.5 581.0 L1021.5 638.5 L992.0 638.5" fill="none" stroke="#000" stroke-width="1" />
<path d="M1019.5 581.0 L1019.5 636.5 L992.0 636.5" fill="none" stroke="#000" stroke-width="1" />
<path d="M1019.5 608.5 L1023.5 608.5" fill="none" stroke="#000" stroke-width="1" />
<path d="M1019.5 611.5 L1023.5 611.5" fill="none" stroke="#000" stroke-width="1" />
<path d="M990.5 634.5 L977.5 634.5 L977.5 655.5 L974.5 655.5 L974.5 664.5 L986.5 664.5 L986.5 642.5 L990.5 642.5 Z" fill="url(#hat)" stroke="#000" stroke-width="1" />
<path d="M623.5 642.5 L627.5 642.5 L627.5 761.5 L623.5 761.5 Z" fill="url(#hat2)" stroke="#000" stroke-width="1" />
<path d="M622.5 643.0 L622.5 761.0" fill="none" stroke="#000" stroke-width="1" stroke-dasharray="2 2"/>
<path d="M815.5 642.5 L821.5 642.5 L821.5 761.5 L815.5 761.5 Z" fill="url(#hat2)" stroke="#000" stroke-width="1" />
<rect x="1046.5" y="383.5" width="5" height="9" fill="#bbb" stroke="#000"/><rect x="1048" y="385.5" width="2" height="5" fill="#fff" stroke="#000" stroke-width="0.8"/>
</svg>
<div class="abs" style="left:623px;top:873px;width:501px;height:18px;background:linear-gradient(#f0f0f2,#e9e9eb);border:1px solid #b0dcf4;opacity:.89;box-shadow:0 3px 4px rgba(0,0,0,.35)"></div>
</body>
</html>
